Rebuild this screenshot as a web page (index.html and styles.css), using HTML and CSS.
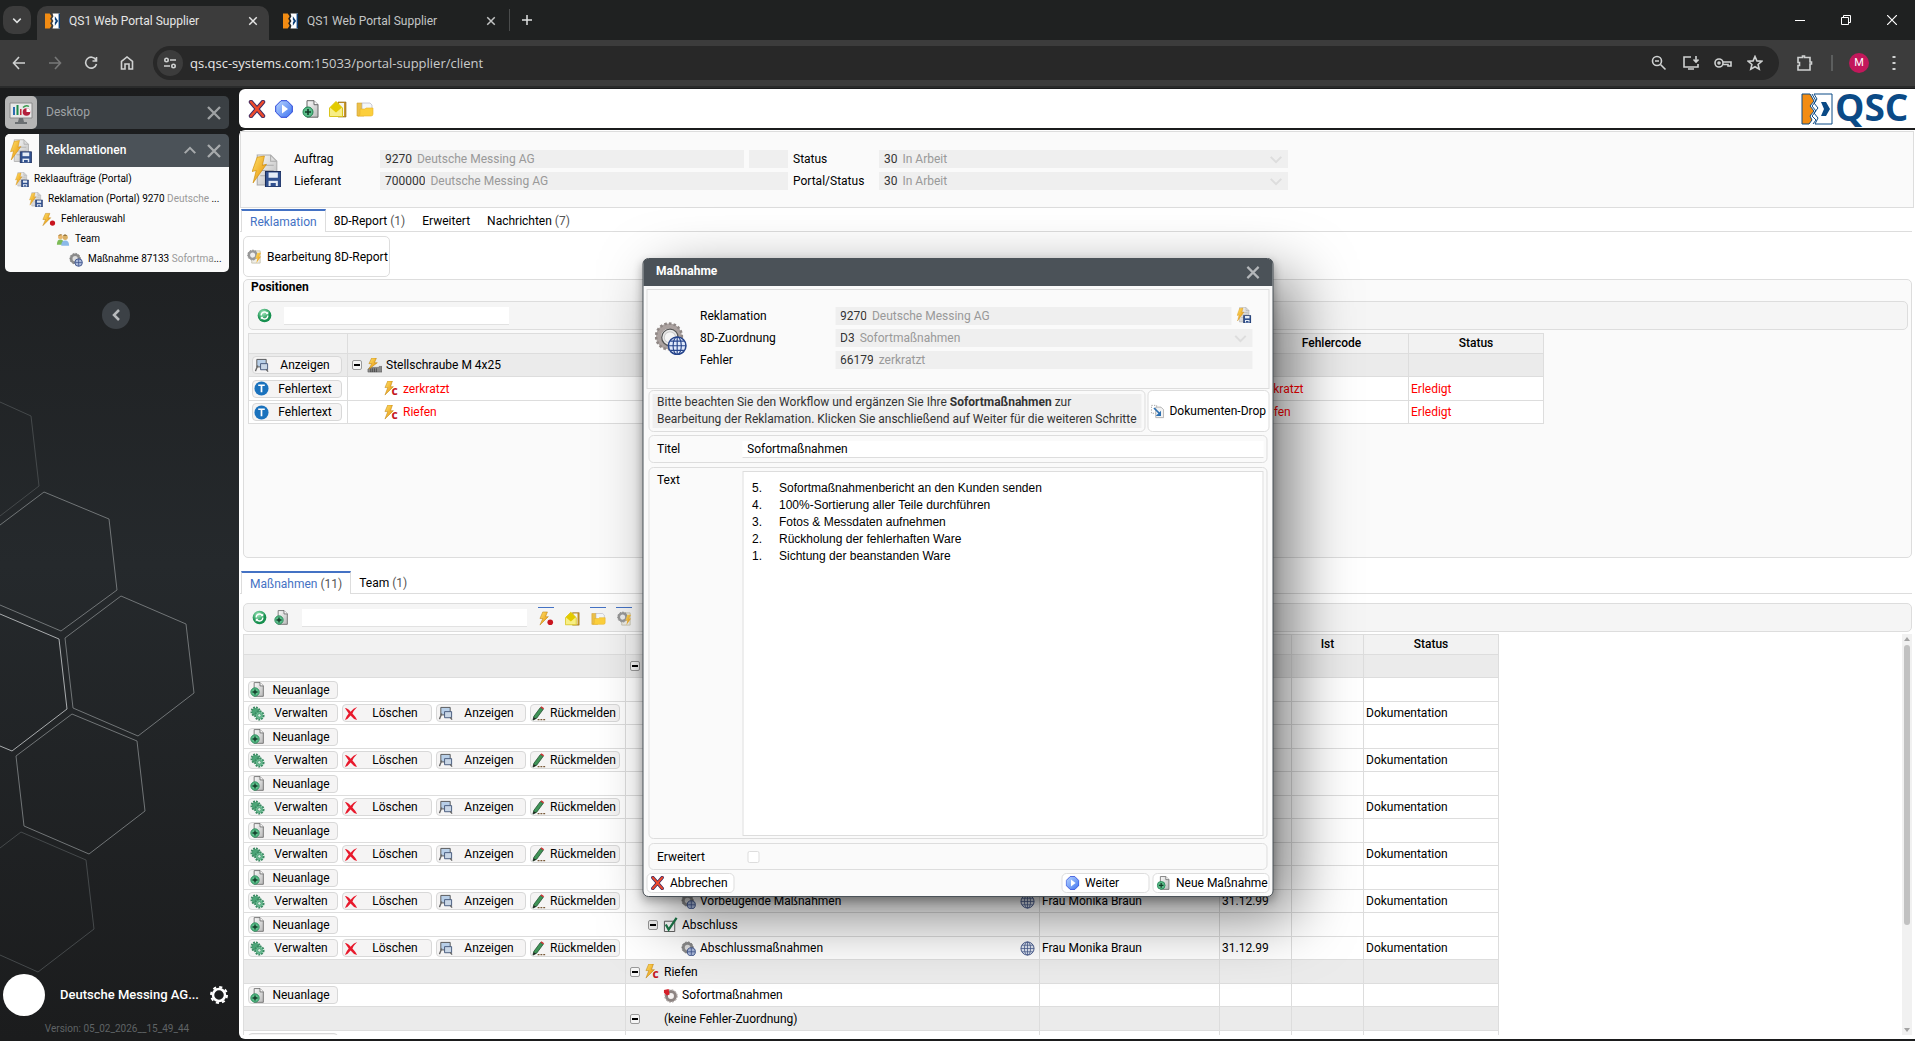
FILE: index.html
```html
<!DOCTYPE html>
<html lang="de">
<head>
    <meta charset="UTF-8">
    <meta name="viewport" content="width=device-width, initial-scale=1.0">
    <title>QS1 Web Portal Supplier</title>
    <link rel="stylesheet" href="styles.css">
</head>
<body>
    <!-- icon set -->
    <svg class="sprite" aria-hidden="true">
        <defs>
            <linearGradient id="gold" x1="0" y1="0" x2="1" y2="1"><stop offset="0" stop-color="#ffe36b"/><stop offset="1" stop-color="#e58a00"/></linearGradient>
            <linearGradient id="blue" x1="0" y1="0" x2="1" y2="1"><stop offset="0" stop-color="#b9d6ff"/><stop offset="1" stop-color="#3f74f0"/></linearGradient>
            <radialGradient id="green" cx=".4" cy=".3"><stop offset="0" stop-color="#a5ecc0"/><stop offset="1" stop-color="#17904f"/></radialGradient>
            <linearGradient id="paper" x1="0" y1="0" x2="1" y2="1"><stop offset="0" stop-color="#fbfbfb"/><stop offset="1" stop-color="#b9b9b9"/></linearGradient>
        </defs>
        <symbol id="i-cancel" viewBox="0 0 18 18"><path d="M3 2l12 14M15 2L3 16" stroke="#3b2a63" stroke-width="4.4" stroke-linecap="round"/><path d="M3 2l12 14M15 2L3 16" stroke="#ee4a2c" stroke-width="2.6" stroke-linecap="round"/></symbol>
        <symbol id="i-play" viewBox="0 0 18 18"><path d="M6 .7h6l5.3 5.3v6L12 17.300H6L.7 12V6z" fill="url(#blue)" stroke="#2743d8"/><path d="M7 4.500l6 4.500-6 4.500z" fill="#fff"/></symbol>
        <symbol id="i-newdoc" viewBox="0 0 18 18"><path d="M5 .7h7l4 4v12.500H5z" fill="url(#paper)" stroke="#666"/><path d="M12 .7v4h4" fill="#fff" stroke="#666"/><circle cx="6" cy="12" r="5" fill="#5cbd8a" stroke="#1f8452"/><path d="M6 9v6M3 12h6" stroke="#123b28" stroke-width="1.600"/></symbol>
        <symbol id="i-mail" viewBox="0 0 18 18"><path d="M9 2h8v15H9z" fill="#c9962b" stroke="#8a6415" stroke-width=".6"/><path d="M10 3h5v13h-5z" fill="#f4f4ee"/><path d="M.5 8L7 1.500 13.500 8v8.500H.5z" fill="#f7ee86" stroke="#d9c41c"/><path d="M1 7.500l6-6 6 6-6 5z" fill="#e3cb00"/></symbol>
        <symbol id="i-folder" viewBox="0 0 18 18"><path d="M1 3h5l1 2h1v11H1z" fill="#ecc04a" stroke="#d2a133" stroke-width=".6"/><path d="M6 3h8l2 2v6H6z" fill="#f4f7f9" stroke="#aab" stroke-width=".6"/><path d="M4 9h5l1-1h7v6q0 2-2 2H2q2 0 2-2z" fill="#fccf3c" stroke="#e9b225" stroke-width=".6"/></symbol>
        <symbol id="i-rekla" viewBox="0 0 28 32"><path d="M5 1h13l6 6v23H5z" fill="url(#paper)" stroke="#aaa"/><path d="M18 1v6h6M8 11h13M8 16h13M8 21h8" fill="none" stroke="#aaa"/><path d="M5 3l7-1-2 9 4-1L1 28l3-12-4 1z" fill="url(#gold)" stroke="#c98500" stroke-width=".6"/><path d="M13 17h15v15H13z" fill="#31518f" stroke="#1b2c59"/><path d="M16 18h9v5h-9zM16 26h9v5h-9z" fill="#e6edf6"/><path d="M15 23.500h11v2H15zM18 28h5v3h-5z" fill="#31518f"/></symbol>
        <symbol id="i-boltdot" viewBox="0 0 16 16"><path d="M4 1h5L7 6h3L1 15l3-7H1z" fill="url(#gold)" stroke="#b97a00" stroke-width=".5"/><circle cx="12" cy="12" r="3" fill="#c9151f"/></symbol>
        <symbol id="i-boltc" viewBox="0 0 16 16"><path d="M4 0h5L7 6h3L1 15l3-8H1z" fill="url(#gold)" stroke="#b97a00" stroke-width=".5"/><text x="8" y="15" class="c-mark">c</text></symbol>
        <symbol id="i-screw" viewBox="0 0 16 16"><path d="M3 10h10v-1h3v6H1v-3z" fill="#8a8a8a" stroke="#555" stroke-width=".6"/><path d="M4 15V11m2 4v-4m2 4v-4m2 4v-4" stroke="#333" stroke-width=".7"/><path d="M5 0h5L8 5h3L2 12l3-6H2z" fill="url(#gold)" stroke="#b97a00" stroke-width=".5"/></symbol>
        <symbol id="i-team" viewBox="0 0 16 16"><path d="M1 14q0-6 4-6t4 6z" fill="#7dbb57"/><path d="M6 15q0-6 4.500-6T15 15z" fill="#8bb9e8"/><circle cx="5" cy="5" r="2.800" fill="#e9b86f"/><circle cx="10.500" cy="5.500" r="3" fill="#d9b066"/><path d="M2.500 4q1-3 5-1.500zM8 4q2-4 5 0z" fill="#9c7a3f"/></symbol>
        <symbol id="i-gearglobe" viewBox="0 0 32 32"><circle cx="14" cy="14" r="10" fill="none" stroke="#aaa19f" stroke-width="5"/><circle cx="14" cy="14" r="12.500" fill="none" stroke="#8f8785" stroke-width="2.500" stroke-dasharray="2.500 2"/><circle cx="15" cy="15" r="8" fill="#e9e9e9" stroke="#555" stroke-width="1.200"/><circle cx="15" cy="15" r="5.500" fill="#f4f4f4" stroke="#ccc"/><circle cx="22" cy="23" r="8.500" fill="#dfe9fb" stroke="#27458c" stroke-width="1.500"/><path d="M22 14.500v17M13.500 23h17M15.500 18.500h13M15.500 27.500h13" stroke="#27458c" stroke-width="1.100"/><ellipse cx="22" cy="23" rx="4" ry="8.500" fill="none" stroke="#27458c" stroke-width="1.100"/></symbol>
        <symbol id="i-gearsm" viewBox="0 0 16 16"><circle cx="7" cy="7" r="4.500" fill="#ddd" stroke="#8b8b8b" stroke-width="3"/><circle cx="7" cy="7" r="6" fill="none" stroke="#777" stroke-width="1" stroke-dasharray="2 1.500"/><circle cx="11" cy="11.500" r="4.300" fill="#a9b9da" stroke="#3a4f88"/><path d="M11 7.500v8M7 11.500h8" stroke="#3a4f88" stroke-width=".8"/></symbol>
        <symbol id="i-gearbolt" viewBox="0 0 16 16"><path d="M6 2h8v13H5z" fill="#f0efe9" stroke="#c7c3b0"/><circle cx="6" cy="6.500" r="4" fill="#eee" stroke="#999" stroke-width="2.600"/><circle cx="6" cy="6.500" r="5.300" fill="none" stroke="#888" stroke-dasharray="1.500 1.500"/><path d="M11 4h4l-2 4h2l-5 7 1-5H9z" fill="url(#gold)"/></symbol>
        <symbol id="i-gearred" viewBox="0 0 16 16"><circle cx="8.500" cy="8.500" r="4.800" fill="#f5f2f1" stroke="#8d8482" stroke-width="3.200"/><circle cx="8.500" cy="8.500" r="6.700" fill="none" stroke="#a9a09e" stroke-width="1" stroke-dasharray="2 1.500"/><path d="M1 2l5-1 1 6-3 1-3-3z" fill="#d5202a"/></symbol>
        <symbol id="i-refresh" viewBox="0 0 16 16"><circle cx="8" cy="8" r="7.300" fill="url(#green)"/><path d="M4.500 8a3.500 3.500 0 0 1 6.500-2M11.500 8a3.500 3.500 0 0 1-6.500 2" stroke="#fff" stroke-width="1.400" fill="none"/><path d="M12 3.500v3.200H9zM4 12.500V9.300h3z" fill="#fff"/></symbol>
        <symbol id="i-view" viewBox="0 0 16 16"><path d="M3 1.500h10v8H3z" fill="#b8cfe8" stroke="#555"/><path d="M7 6h7.500v6.500H7z" fill="#c8d6e6" stroke="#44597c"/><path d="M4 8l-2.500 6M13 12l2 2.500" stroke="#666" stroke-width="1.400"/></symbol>
        <symbol id="i-text" viewBox="0 0 16 16"><circle cx="8" cy="8" r="7.500" fill="#1a72bd"/><path d="M4.500 4.500h7M8 4.500v7.500" stroke="#fff" stroke-width="1.800"/></symbol>
        <symbol id="i-gears" viewBox="0 0 16 16"><circle cx="6" cy="6" r="4" fill="#4ca577"/><circle cx="6" cy="6" r="4.500" fill="none" stroke="#3b8a62" stroke-width="2" stroke-dasharray="2 1"/><circle cx="10" cy="10" r="4" fill="#6dc096"/><circle cx="10" cy="10" r="4.500" fill="none" stroke="#3b8a62" stroke-width="2" stroke-dasharray="2 1"/><circle cx="10" cy="10" r="1.800" fill="#d7f0e2" stroke="#2c7a53" stroke-width=".6"/></symbol>
        <symbol id="i-delete" viewBox="0 0 16 16"><path d="M1 2q3 0 6 4 3-4 7-5-4 4-5 7 3 3 5 7-4-1-7-5-3 4-6 5 2-5 4-7-2-3-4-6z" fill="#e8192c"/></symbol>
        <symbol id="i-pencil" viewBox="0 0 16 16"><path d="M2 11L9 1.500l3 2L5 13l-4 2z" fill="#3f9457" stroke="#1e4b2b" stroke-width=".8"/><path d="M9 1.500l1-1.200 3 2-1 1.200z" fill="#c33"/><path d="M1 15l.8-3L4.500 13.500z" fill="#222"/><path d="M6 14.500h9" stroke="#7a5b3a" stroke-width="1.300" stroke-dasharray="2 1"/></symbol>
        <symbol id="i-globe" viewBox="0 0 16 16"><circle cx="8" cy="8" r="7" fill="#dfe6f3" stroke="#46598c"/><ellipse cx="8" cy="8" rx="3.300" ry="7" fill="none" stroke="#46598c" stroke-width=".8"/><path d="M8 1v14M1 8h14M2.200 4.500h11.600M2.200 11.500h11.600" stroke="#46598c" stroke-width=".8"/></symbol>
        <symbol id="i-check" viewBox="0 0 16 16"><path d="M1.500 4.500h11v11h-11z" fill="#fff" stroke="#555"/><path d="M3 8l3 5.500L14.500 1" fill="none" stroke="#1c7a4a" stroke-width="2.400"/></symbol>
        <symbol id="i-drop" viewBox="0 0 16 16"><path d="M1 1h6v9H1z" fill="none" stroke="#999" stroke-dasharray="1.500 1.500"/><path d="M6 3h6l3 3v9H6z" fill="#f2f2f2" stroke="#aaa"/><path d="M4 4l6 6" stroke="#2c6fb0" stroke-width="2"/><path d="M12 7v6H6z" fill="#2c6fb0"/></symbol>
        <symbol id="i-desktop" viewBox="0 0 24 24"><path d="M1 2h22v15H1z" fill="#e9e9e9" stroke="#8a8a8a"/><path d="M10 17h4l1 4h3v2H6v-2h3z" fill="#6b6f72"/><path d="M4 14V6h2v8z" fill="#2b6cb0"/><path d="M7.500 14V4h2v10z" fill="#1c8a4a"/><path d="M11 14V8h1.500v6z" fill="#c22b3a"/><circle cx="17.500" cy="11" r="3.800" fill="#b3203c"/><path d="M17.500 11V7.200a3.800 3.800 0 0 1 3.800 3.800z" fill="#fff"/><path d="M14 6.500q3-3 6-1" fill="none" stroke="#3a9b4f" stroke-width="1.500"/></symbol>
        <symbol id="i-x" viewBox="0 0 16 16"><path d="M2 2l12 12M14 2L2 14" fill="none" stroke="currentColor" stroke-width="2.300"/></symbol>
        <symbol id="i-down" viewBox="0 0 16 10"><path d="M2 2l6 6 6-6" fill="none" stroke="currentColor" stroke-width="2.400"/></symbol>
        <symbol id="i-fav" viewBox="0 0 16 16"><path d="M0 0h5l2 3-1.500 2.500L7 8l-1.500 2.500L7 13l-2 3H0z" fill="#f28c13"/><path d="M8 0h8v16H8l1-3-1.500-2.500L9 8 7.500 5.500 9 3z" fill="#fff"/><path d="M10.500 3l3.500 5-3.500 5V9.500L11.500 8l-1-1.500z" fill="#0b3f78"/><path d="M14.500 0H16v16h-1.500z" fill="#0b3f78"/></symbol>
    </svg>

    <header class="browser">
        <div class="tabstrip">
            <button class="tab-search" aria-label="Tabs durchsuchen"><svg width="10" height="7"><use href="#i-down"/></svg></button>
            <div class="btab active">
                <svg width="15" height="16"><use href="#i-fav"/></svg><span>QS1 Web Portal Supplier</span>
                <button aria-label="Tab schließen"><svg width="10" height="10"><use href="#i-x"/></svg></button>
            </div>
            <div class="btab">
                <svg width="15" height="16"><use href="#i-fav"/></svg><span>QS1 Web Portal Supplier</span>
                <button aria-label="Tab schließen"><svg width="10" height="10"><use href="#i-x"/></svg></button>
            </div>
            <button class="new-tab" aria-label="Neuer Tab"><svg width="12" height="12" viewBox="0 0 12 12"><path d="M6 1v10M1 6h10" stroke="currentColor" stroke-width="1.500"/></svg></button>
            <div class="win-buttons">
                <button aria-label="Minimieren"><svg width="10" height="10"><path d="M0 5.500h10" stroke="#fff"/></svg></button>
                <button aria-label="Verkleinern"><svg width="10" height="10" fill="none" stroke="#fff"><path d="M.5 2.500h7v7h-7zM2.500 2.500v-2h7v7h-2"/></svg></button>
                <button aria-label="Schließen"><svg width="10" height="10"><path d="M0 0l10 10M10 0L0 10" stroke="#fff" stroke-width="1.200"/></svg></button>
            </div>
        </div>
        <div class="navbar">
            <button aria-label="Zurück"><svg width="14" height="14" viewBox="0 0 14 14"><path d="M7 1L1.500 7 7 13M1.500 7H13"/></svg></button>
            <button aria-label="Vorwärts" class="dim"><svg width="14" height="14" viewBox="0 0 14 14"><path d="M7 1l5.500 6L7 13M12.500 7H1"/></svg></button>
            <button aria-label="Neu laden"><svg width="14" height="14" viewBox="0 0 14 14"><path d="M12 4A5.500 5.500 0 1 0 12.500 8M12.500 1v4h-4"/></svg></button>
            <button aria-label="Startseite"><svg width="14" height="14" viewBox="0 0 14 14"><path d="M1.500 13V5.500L7 1l5.500 4.500V13H9V8H5v5z"/></svg></button>
            <div class="omnibox">
                <button class="site-info" aria-label="Websiteinformationen"><svg width="14" height="14" viewBox="0 0 14 14"><circle cx="3.500" cy="4" r="1.700"/><path d="M7 4h6M1 10h6"/><circle cx="10.500" cy="10" r="1.700"/></svg></button>
                <p class="url"><b>qs.qsc-systems.com</b>:15033/portal-supplier/client</p>
                <button aria-label="Zoom"><svg width="16" height="16" viewBox="0 0 16 16"><circle cx="6" cy="6" r="4.500"/><path d="M4 6h4M9.500 9.500l5 5"/></svg></button>
                <button aria-label="Installieren"><svg width="16" height="16" viewBox="0 0 16 16"><path d="M8 2H1v10h14V9M5 14h6M13 1v5M10.500 4.500L13 7l2.500-2.500"/></svg></button>
                <button aria-label="Passwörter"><svg width="18" height="14" viewBox="0 0 18 14"><circle cx="5" cy="7" r="4"/><circle cx="5" cy="7" r="1"/><path d="M9 6h8v4h-3V8.500H9"/></svg></button>
                <button aria-label="Lesezeichen"><svg width="16" height="16" viewBox="0 0 16 16"><path d="M8 1.500l1.900 4.400 4.800.4-3.600 3.200 1.100 4.700L8 11.700l-4.200 2.500 1.100-4.700L1.300 6.300l4.800-.4z"/></svg></button>
            </div>
            <button class="ext" aria-label="Erweiterungen"><svg width="18" height="18" viewBox="0 0 18 18"><path d="M2 3.500h4.500V2h2v1.500H14V8h1.500v2H14v6H2v-4.500h1.500v-3H2z"/></svg></button>
            <span class="sep"></span>
            <button class="avatar" aria-label="Profil">M</button>
            <button class="menu" aria-label="Menü"><svg width="4" height="16" viewBox="0 0 4 16"><path d="M2 1v2M2 7v2M2 13v2" stroke-width="3"/></svg></button>
        </div>
    </header>

    <div class="app">
        <aside class="sidebar">
            <svg class="hexes" width="239" height="953" viewBox="0 88 239 953" aria-hidden="true">
                <g fill="none" stroke="#717577">
                    <path d="M0 402l31 14 8 70-39 30" stroke="#45494b"/>
                    <path d="M0 525l44-33 65 27 8 71-56 41-61-26"/>
                    <path d="M0 614l59 25 8 70-55 42-12-5" stroke="#a9acae"/>
                    <path d="M65 638l56-42 65 28 8 69-56 43-65-28z"/>
                    <path d="M16 756l56-42 65 27 8 70-56 43-65-28z"/>
                    <path d="M0 848l21-16 65 28 8 69-56 43-38-17" stroke="#45494b"/>
                </g>
            </svg>
            <nav>
                <div class="app-item">
                    <span class="app-icon"><svg width="24" height="24"><use href="#i-desktop"/></svg></span>
                    <a href="#">Desktop</a>
                    <button aria-label="Desktop schließen"><svg width="16" height="16"><use href="#i-x"/></svg></button>
                </div>
                <div class="app-item open">
                    <span class="app-icon"><svg width="22" height="24"><use href="#i-rekla"/></svg></span>
                    <a href="#">Reklamationen</a>
                    <button aria-label="Zuklappen"><svg class="up" width="14" height="9"><use href="#i-down"/></svg></button>
                    <button aria-label="Reklamationen schließen"><svg width="16" height="16"><use href="#i-x"/></svg></button>
                </div>
                <ul class="tree">
                    <li><a href="#"><svg><use href="#i-rekla"/></svg>Reklaaufträge (Portal)</a></li>
                    <li class="l1"><a href="#"><svg><use href="#i-rekla"/></svg>Reklamation (Portal) 9270 <span>Deutsche</span> ...</a></li>
                    <li class="l2"><a href="#"><svg><use href="#i-boltdot"/></svg>Fehlerauswahl</a></li>
                    <li class="l3"><a href="#"><svg><use href="#i-team"/></svg>Team</a></li>
                    <li class="l4"><a href="#"><svg><use href="#i-gearsm"/></svg>Maßnahme 87133 <span>Sofortma</span>...</a></li>
                </ul>
            </nav>
            <button class="collapse" aria-label="Seitenleiste einklappen"><svg width="9" height="14" viewBox="0 0 9 14"><path d="M7 2L2 7l5 5" fill="none" stroke="currentColor" stroke-width="2.500"/></svg></button>
            <div class="user">
                <span class="user-pic"></span>
                <strong>Deutsche Messing AG...</strong>
                <button aria-label="Einstellungen"><svg width="20" height="20" viewBox="0 0 20 20"><circle cx="10" cy="10" r="6" fill="none" stroke="#fff" stroke-width="2.500"/><circle cx="10" cy="10" r="8" fill="none" stroke="#fff" stroke-width="2" stroke-dasharray="3.140 3.140"/></svg></button>
            </div>
            <p class="version">Version: 05_02_2026__15_49_44</p>
        </aside>

        <main>
            <div class="topbar">
                <button aria-label="Abbrechen"><svg><use href="#i-cancel"/></svg></button>
                <button aria-label="Weiter"><svg><use href="#i-play"/></svg></button>
                <button aria-label="Neu"><svg><use href="#i-newdoc"/></svg></button>
                <button aria-label="Nachricht"><svg><use href="#i-mail"/></svg></button>
                <button aria-label="Ordner"><svg><use href="#i-folder"/></svg></button>
                <svg class="logo" width="108" height="38" viewBox="0 0 108 38" role="img" aria-label="QSC">
                    <path d="M1 4h8l4 7-4 5 4 5-4 5 2 4-3 4H1z" fill="#f28c13" stroke="#0b4a86"/>
                    <path d="M13 4h18v30H14l3-6-4-5 4-5-4-5 3-4z" fill="#fff" stroke="#0b4a86"/>
                    <path d="M11 4l4 7-4 5 4 5-4 5 4 4-3 4" fill="none" stroke="#0b4a86"/>
                    <path d="M20 12h5l4 7-4 7h-5l3-7z" fill="#0b4a86"/>
                    <text x="34" y="31">QSC</text>
                </svg>
            </div>

            <div class="content">
                <section class="record">
                    <svg class="record-icon"><use href="#i-rekla"/></svg>
                    <div class="record-form">
                        <label for="auftrag">Auftrag</label>
                        <div class="pair"><div class="field"><input id="auftrag" value="9270" size="4" readonly><span>Deutsche Messing AG</span></div><div class="field extra"></div></div>
                        <label for="status">Status</label>
                        <div class="field"><select id="status"><option>30</option></select><span>In Arbeit</span><svg><use href="#i-down"/></svg></div>
                        <label for="lieferant">Lieferant</label>
                        <div class="field"><input id="lieferant" value="700000" size="6" readonly><span>Deutsche Messing AG</span></div>
                        <label for="pstatus">Portal/Status</label>
                        <div class="field"><select id="pstatus"><option>30</option></select><span>In Arbeit</span><svg><use href="#i-down"/></svg></div>
                    </div>
                </section>

                <div class="tabs" role="tablist">
                    <button role="tab" class="active">Reklamation</button>
                    <button role="tab">8D-Report <i>(1)</i></button>
                    <button role="tab">Erweitert</button>
                    <button role="tab">Nachrichten <i>(7)</i></button>
                </div>
                <button class="big-btn"><svg><use href="#i-gearbolt"/></svg>Bearbeitung 8D-Report</button>

                <section class="group">
                    <h2>Positionen</h2>
                    <div class="toolbar">
                        <button aria-label="Aktualisieren"><svg><use href="#i-refresh"/></svg></button>
                        <input type="text" aria-label="Suche Positionen">
                    </div>
                    <table class="positions">
                        <colgroup><col class="c-act"><col><col class="c-code"><col class="c-status"></colgroup>
                        <thead><tr><th></th><th></th><th>Fehlercode</th><th>Status</th></tr></thead>
                        <tbody>
                            <tr class="grp"><td><button class="row-btn"><svg><use href="#i-view"/></svg><span>Anzeigen</span></button></td><td><div class="node"><button class="fold" aria-label="Zuklappen"></button><svg><use href="#i-screw"/></svg>Stellschraube M 4x25</div></td><td></td><td></td></tr>
                            <tr class="red"><td><button class="row-btn"><svg><use href="#i-text"/></svg><span>Fehlertext</span></button></td><td><div class="node n2"><svg><use href="#i-boltc"/></svg>zerkratzt</div></td><td>zerkratzt</td><td>Erledigt</td></tr>
                            <tr class="red"><td><button class="row-btn"><svg><use href="#i-text"/></svg><span>Fehlertext</span></button></td><td><div class="node n2"><svg><use href="#i-boltc"/></svg>Riefen</div></td><td>Riefen</td><td>Erledigt</td></tr>
                        </tbody>
                    </table>
                </section>

                <div class="tabs lower" role="tablist">
                    <button role="tab" class="active">Maßnahmen <i>(11)</i></button>
                    <button role="tab">Team <i>(1)</i></button>
                </div>
                <div class="toolbar actions">
                    <button aria-label="Aktualisieren"><svg><use href="#i-refresh"/></svg></button>
                    <button aria-label="Neuanlage"><svg><use href="#i-newdoc"/></svg></button>
                    <input type="text" aria-label="Suche Maßnahmen">
                    <button class="toggle on" aria-label="Fehler"><svg><use href="#i-boltdot"/></svg></button>
                    <button class="toggle" aria-label="Nachricht"><svg><use href="#i-mail"/></svg></button>
                    <button class="toggle on" aria-label="Ordner"><svg><use href="#i-folder"/></svg></button>
                    <button class="toggle on" aria-label="Bearbeitung"><svg><use href="#i-gearbolt"/></svg></button>
                </div>
                <div class="scroll">
                    <table class="measures">
                        <colgroup><col class="m-act"><col><col class="m-who"><col class="m-date"><col class="m-date"><col class="m-status"></colgroup>
                        <thead><tr><th></th><th></th><th></th><th></th><th>Ist</th><th>Status</th></tr></thead>
                        <tbody id="measures"></tbody>
                    </table>
                    <div class="scrollbar"><span class="arrow up"></span><span class="thumb"></span><span class="arrow"></span></div>
                </div>
            </div>
        </main>
    </div>

    <div class="dialog" role="dialog" aria-labelledby="dlg-title">
        <div class="dialog-head">
            <h2 id="dlg-title">Maßnahme</h2>
            <button aria-label="Schließen"><svg width="15" height="15"><use href="#i-x"/></svg></button>
        </div>
        <div class="dialog-record">
            <svg class="gear"><use href="#i-gearglobe"/></svg>
            <div class="dialog-form">
                <label for="d-rekla">Reklamation</label>
                <div class="pair"><div class="field"><input id="d-rekla" value="9270" size="4" readonly><span>Deutsche Messing AG</span></div><svg class="link"><use href="#i-rekla"/></svg></div>
                <label for="d-8d">8D-Zuordnung</label>
                <div class="field"><select id="d-8d"><option>D3</option></select><span>Sofortmaßnahmen</span><svg><use href="#i-down"/></svg></div>
                <label for="d-fehler">Fehler</label>
                <div class="field"><input id="d-fehler" value="66179" size="5" readonly><span>zerkratzt</span></div>
            </div>
        </div>
        <div class="hint-row">
            <div class="box hint"><p>Bitte beachten Sie den Workflow und ergänzen Sie Ihre <b>Sofortmaßnahmen</b> zur<br>Bearbeitung der Reklamation. Klicken Sie anschließend auf Weiter für die weiteren Schritte</p></div>
            <button class="drop"><svg><use href="#i-drop"/></svg>Dokumenten-Drop</button>
        </div>
        <div class="box row">
            <label for="d-titel">Titel</label>
            <input id="d-titel" type="text" value="Sofortmaßnahmen">
        </div>
        <div class="box row grow">
            <span>Text</span>
            <div class="editor" contenteditable="true" aria-label="Text">
                <ol reversed>
                    <li>Sofortmaßnahmenbericht an den Kunden senden</li>
                    <li>100%-Sortierung aller Teile durchführen</li>
                    <li>Fotos &amp; Messdaten aufnehmen</li>
                    <li>Rückholung der fehlerhaften Ware</li>
                    <li>Sichtung der beanstanden Ware</li>
                </ol>
            </div>
        </div>
        <div class="box row">
            <label for="d-erw">Erweitert</label>
            <input id="d-erw" type="checkbox">
        </div>
        <div class="dialog-foot">
            <button><svg><use href="#i-cancel"/></svg>Abbrechen</button>
            <button class="next"><svg><use href="#i-play"/></svg>Weiter</button>
            <button class="new"><svg><use href="#i-newdoc"/></svg>Neue Maßnahme</button>
        </div>
    </div>

    <script>
        const NEW = [['newdoc', 'Neuanlage']];
        const EDIT = [['gears', 'Verwalten'], ['delete', 'Löschen'], ['view', 'Anzeigen'], ['pencil', 'Rückmelden']];

        // level, icon, text, foldable, person, date
        const rows = [
            { grp: true, fold: true },
            { act: NEW }, { act: EDIT, status: 'Dokumentation' },
            { act: NEW }, { act: EDIT, status: 'Dokumentation' },
            { act: NEW }, { act: EDIT, status: 'Dokumentation' },
            { act: NEW }, { act: EDIT, status: 'Dokumentation' },
            { act: NEW }, { act: EDIT, level: 2, icon: 'gearsm', text: 'Vorbeugende Maßnahmen', who: 'Frau Monika Braun', date: '31.12.99', status: 'Dokumentation' },
            { act: NEW, level: 1, fold: true, icon: 'check', text: 'Abschluss' },
            { act: EDIT, level: 2, icon: 'gearsm', text: 'Abschlussmaßnahmen', who: 'Frau Monika Braun', date: '31.12.99', status: 'Dokumentation' },
            { grp: true, fold: true, icon: 'boltc', text: 'Riefen' },
            { act: NEW, level: 1, icon: 'gearred', text: 'Sofortmaßnahmen', leaf: true },
            { grp: true, fold: true, text: '(keine Fehler-Zuordnung)' },
            { act: NEW }
        ];

        const icon = name => name ? `<svg><use href="#i-${name}"/></svg>` : '<svg></svg>';
        const button = ([name, text]) => `<button class="row-btn">${icon(name)}<span>${text}</span></button>`;

        document.getElementById('measures').innerHTML = rows.map(r => {
            const fold = r.fold ? '<button class="fold" aria-label="Zuklappen"></button>' : '<span class="nofold"></span>';
            const node = r.text || r.fold
                ? `<div class="node m${r.level || 0}">${fold}${icon(r.icon)}${r.text || ''}${r.who ? '<svg class="web"><use href="#i-globe"/></svg>' : ''}</div>`
                : '';
            return `<tr class="${r.grp ? 'grp' : ''}">
                <td><div class="btns">${(r.act || []).map(button).join('')}</div></td>
                <td>${node}</td><td>${r.who || ''}</td><td>${r.date || ''}</td><td></td><td>${r.status || ''}</td></tr>`;
        }).join('');
    </script>
</body>
</html>
```

FILE: styles.css
```css
* {
    box-sizing: border-box;
}
body {
    margin: 0;
    height: 100vh;
    display: flex;
    flex-direction: column;
    overflow: hidden;
    background: #1b1c1d;
    font-family: Roboto, Arial, sans-serif;
    font-size: 12px;
    line-height: 16px;
    color: #000;
}
button, input, select {
    font: inherit;
    color: inherit;
}
button {
    padding: 0;
    border: none;
    background: none;
    display: inline-flex;
    align-items: center;
    justify-content: center;
    white-space: nowrap;
}
h2, p, ul, ol {
    margin: 0;
    padding: 0;
}
svg {
    flex: none;
}
a {
    color: inherit;
    text-decoration: none;
}
.sprite {
    position: absolute;
    width: 0;
    height: 0;
}
.c-mark {
    font: bold 13px "Open Sans", sans-serif;
    fill: #c4161c;
}

/* browser frame */
.browser {
    flex: none;
    color: #dfe1e1;
}
.tabstrip {
    display: flex;
    align-items: flex-end;
    height: 40px;
    padding-left: 3px;
    background: #1f2121;
}
.tab-search {
    width: 28px;
    height: 28px;
    margin: 0 6px 6px 0;
    border-radius: 10px;
    background: #3c3c3c;
}
.btab {
    display: flex;
    align-items: center;
    width: 232px;
    height: 34px;
    padding: 0 11px 4px 8px;
    color: #c3c5c5;
}
.btab.active {
    background: #3c3c3c;
    border-radius: 10px 10px 0 0;
    color: #e6e6e6;
}
.btab + .btab {
    margin-left: 6px;
}
.btab span {
    flex: 1;
    margin-left: 9px;
    white-space: nowrap;
}
.new-tab {
    width: 28px;
    height: 22px;
    margin: 0 0 9px 2px;
    padding-left: 6px;
    border-left: 1px solid #4a4c4c;
}
.win-buttons {
    display: flex;
    align-self: center;
    margin-left: auto;
}
.win-buttons button {
    width: 46px;
    height: 40px;
}
.navbar {
    display: flex;
    align-items: center;
    height: 48px;
    padding: 0 9px 0 1px;
    background: #3c3c3c;
    border-bottom: 2px solid #2a2b2b;
}
.navbar svg {
    fill: none;
    stroke: #cfd1d1;
    stroke-width: 1.6;
}
.navbar > button {
    width: 36px;
    height: 34px;
}
.navbar .dim {
    opacity: 0.4;
}
.omnibox {
    flex: 1;
    display: flex;
    align-items: center;
    height: 34px;
    margin-left: 8px;
    padding: 0 8px 0 4px;
    border-radius: 17px;
    background: #282828;
}
.omnibox button {
    width: 32px;
}
.omnibox .site-info {
    width: 26px;
    height: 26px;
    border-radius: 13px;
    background: #3c3c3c;
}
.url {
    flex: 1;
    margin-left: 7px;
    font-family: "Open Sans", sans-serif;
    font-size: 13px;
    color: #c9cbcb;
}
.url b {
    font-weight: normal;
    color: #e8e8e8;
}
.navbar .ext {
    width: 52px;
}
.sep {
    width: 2px;
    height: 16px;
    background: #5c5e5e;
}
.navbar .avatar {
    width: 20px;
    height: 20px;
    margin: 0 13px 0 16px;
    border-radius: 10px;
    background: #c2185b;
    color: #fff;
    font-size: 11px;
}
.navbar .menu {
    width: 24px;
}

/* sidebar */
.app {
    flex: 1;
    min-height: 0;
    display: flex;
}
.sidebar {
    position: relative;
    flex: none;
    display: flex;
    flex-direction: column;
    width: 239px;
    padding: 8px 10px 4px 5px;
    background: linear-gradient(#1b1c1d, #25292c 50%, #1b1c1d);
}
.hexes {
    position: absolute;
    left: 0;
    top: 0;
}
.sidebar nav {
    position: relative;
}
.app-item {
    display: flex;
    align-items: center;
    height: 33px;
    margin-bottom: 5px;
    padding-right: 7px;
    border-radius: 5px;
    background: #3b4044;
    color: #9fa2a4;
}
.app-item a {
    flex: 1;
    margin-left: 9px;
    padding-bottom: 1px;
}
.app-item button + button {
    margin-left: 9px;
}
.app-icon {
    display: flex;
    align-items: center;
    justify-content: center;
    width: 32px;
    height: 33px;
    border-radius: 5px;
    background: #b5b5b5;
}
.app-item.open {
    margin-bottom: 0;
    border-radius: 5px 5px 0 0;
    background: linear-gradient(90deg, #fafafa 34px, #4b5258 34px);
    color: #a7aaac;
}
.open .app-icon {
    background: #fafafa;
}
.open a {
    color: #fff;
    font-weight: 500;
}
.up {
    transform: rotate(180deg);
}
.tree {
    height: 105px;
    padding: 2px 4px 0 10px;
    border-radius: 0 0 5px 5px;
    background: #fafafa;
    list-style: none;
    font-size: 10px;
}
.tree li {
    height: 20px;
}
.tree a {
    display: flex;
    align-items: center;
    height: 20px;
    white-space: pre;
}
.tree svg {
    width: 14px;
    height: 15px;
    margin-right: 5px;
}
.tree span {
    color: #999;
}
.tree .l1 { padding-left: 14px; }
.tree .l2 { padding-left: 27px; }
.tree .l3 { padding-left: 41px; }
.tree .l4 { padding-left: 54px; }
.collapse {
    position: relative;
    width: 28px;
    height: 28px;
    margin: 29px 0 0 97px;
    border-radius: 14px;
    background: #3c4146;
    color: #b9bbbd;
}
.user {
    position: relative;
    display: flex;
    align-items: center;
    margin-top: auto;
}
.user-pic {
    width: 42px;
    height: 42px;
    margin-left: -2px;
    border-radius: 21px;
    background: #fff;
}
.user strong {
    flex: 1;
    margin-left: 15px;
    color: #fff;
    font-size: 13px;
    font-weight: 500;
    white-space: nowrap;
}
.version {
    position: relative;
    margin-top: 5px;
    color: #5f6365;
    font-size: 10px;
    text-align: center;
}

/* main area */
main {
    flex: 1;
    min-width: 0;
    display: flex;
    flex-direction: column;
    padding: 1px 0 2px;
}
.topbar {
    flex: none;
    display: flex;
    align-items: center;
    gap: 9px;
    height: 39px;
    padding: 0 6px 0 9px;
    border-radius: 6px 0 0 6px;
    background: #fff;
}
.topbar button svg {
    width: 18px;
    height: 18px;
}
.logo {
    margin-left: auto;
    overflow: visible;
}
.logo text {
    font: 700 37px "Open Sans", sans-serif;
    fill: #0b4a86;
}
.content {
    flex: 1;
    min-height: 0;
    display: flex;
    flex-direction: column;
    margin-top: 2px;
    padding: 1px 3px 4px 1px;
    border-radius: 6px 0 0 6px;
    background: #fff;
}
.record {
    flex: none;
    display: flex;
    margin-right: -2px;
    padding: 18px 11px 17px;
    border: 1px solid #ddd;
    background: #fafafa;
}
.record-icon {
    width: 29px;
    height: 33px;
    margin: 4px 13px 0 0;
}
.record-form {
    display: grid;
    grid-template-columns: 86px 408px 91px 409px;
    row-gap: 4px;
    align-items: center;
}
.record-form label:nth-of-type(even) {
    padding-left: 5px;
}
.field {
    flex: 1;
    display: flex;
    align-items: center;
    gap: 5px;
    height: 18px;
    padding: 0 5px;
    background: #efefef;
}
.field input, .field select {
    field-sizing: content;
    height: 18px;
    padding: 0;
    border: none;
    outline: none;
    background: none;
    appearance: none;
    color: #333;
}
.field span {
    flex: 1;
    color: #999;
}
.field svg {
    width: 14px;
    height: 9px;
    color: #ddd;
}
.pair {
    display: flex;
    gap: 5px;
}
.field.extra {
    flex: 0 0 39px;
}
.tabs {
    flex: none;
    display: flex;
    height: 23px;
    margin-top: 1px;
    border-bottom: 1px solid #ddd;
}
.tabs button {
    height: 23px;
    padding: 0 8px;
    white-space: pre;
}
.tabs i {
    color: #555;
    font-style: normal;
}
.tabs button + button {
    padding: 0 9px 0 8px;
}
.tabs .active {
    margin-left: 1px;
    padding: 0 8px;
    border: 1px solid #ddd;
    border-top: 2px solid #4472c4;
    border-bottom: none;
    background: #fff;
    color: #4472c4;
}
.big-btn {
    flex: none;
    align-self: flex-start;
    gap: 5px;
    height: 41px;
    margin: 4px 0 2px 3px;
    padding: 0 1px 0 3px;
    border: 1px solid #ddd;
    border-radius: 5px;
    background: #fff;
}
.big-btn svg {
    width: 15px;
    height: 15px;
}
.group {
    flex: none;
    min-height: 279px;
    margin-left: 3px;
    padding: 0 3px 0 4px;
    border: 1px solid #ddd;
    border-radius: 5px;
    background: #fafafa;
}
.group h2 {
    padding: 0 3px 7px;
    font-size: 12px;
    line-height: 14px;
}
.toolbar {
    flex: none;
    display: flex;
    align-items: center;
    height: 29px;
    padding-left: 8px;
    border: 1px solid #ddd;
    border-radius: 5px;
    background: #f5f5f5;
}
.toolbar svg {
    width: 15px;
    height: 15px;
}
.toolbar input {
    width: 225px;
    height: 18px;
    margin-left: 12px;
    padding: 0 4px;
    border: none;
    border-bottom: 1px solid #e2e2e2;
    background: #fff;
}
.lower {
    margin-top: 13px;
}
.actions {
    margin: 9px 0 2px 3px;
}
.actions button + button {
    margin-left: 7px;
}
.actions input {
    margin: 0 11px 0 13px;
}
.actions .toggle {
    width: 16px;
    height: 22px;
    border-top: 1px solid transparent;
}
.actions .toggle + .toggle {
    margin-left: 10px;
}
.actions .toggle.on {
    border-top-color: #4472c4;
}

/* tables */
table {
    table-layout: fixed;
    border-collapse: collapse;
    background: #fff;
}
th, td {
    height: 23px;
    padding: 0 2px;
    border: 1px solid #ddd;
    text-align: left;
}
tbody tr:nth-child(even) td {
    height: 24px;
}
th {
    height: 20px;
    padding-bottom: 2px;
    background: #f2f2f2;
    text-align: center;
    font-weight: 500;
}
.grp td {
    background: #ebebeb;
}
.red {
    color: #f00;
}
.positions {
    width: 1296px;
    margin-top: 3px;
}
.c-act { width: 99px; }
.c-code { width: 154px; }
.c-status { width: 135px; }
.measures {
    width: 1256px;
}
.m-act { width: 382px; }
.m-who { width: 180px; }
.m-date { width: 72px; }
.m-status { width: 135px; }
.btns {
    display: flex;
    gap: 4px;
    padding-left: 2px;
}
.row-btn {
    width: 90px;
    height: 18px;
    padding-left: 1px;
    border: 1px solid #d8d8d8;
    border-radius: 4px;
    background: #f5f4f4;
}
.row-btn svg {
    width: 15px;
    height: 15px;
}
.row-btn span {
    flex: 1;
}
.positions .row-btn {
    display: flex;
    margin-left: 1px;
    color: #000;
}
.node {
    display: flex;
    align-items: center;
    height: 18px;
}
.node svg {
    width: 15px;
    height: 15px;
    margin-right: 4px;
}
.node .web {
    margin: 0 2px 0 auto;
}
.n2 { padding-left: 34px; }
.m1 { padding-left: 18px; }
.m2 { padding-left: 36px; }
.fold, .nofold {
    flex: none;
    width: 10px;
    height: 10px;
    margin: 0 5px 0 2px;
}
.fold {
    border: 1px solid #999;
    border-radius: 2px;
    background: linear-gradient(#000, #000) center / 6px 2px no-repeat #f5f5f5;
}
.scroll {
    flex: 1;
    min-height: 0;
    display: flex;
    justify-content: space-between;
    align-items: flex-start;
    margin-left: 3px;
    overflow: hidden;
}
.scrollbar {
    display: flex;
    flex-direction: column;
    align-items: center;
    align-self: stretch;
    width: 10px;
    padding: 3px 0;
    background: #f1f1f1;
}
.thumb {
    flex: 0 0 71%;
    width: 6px;
    margin: 4px 0 auto;
    border-radius: 3px;
    background: #c1c1c1;
}
.arrow {
    border: 3px solid transparent;
    border-top: 4px solid #a3a3a3;
    border-bottom: none;
}

/* floating window */
.dialog {
    position: absolute;
    top: 258px;
    left: 50%;
    transform: translateX(-50%);
    display: flex;
    flex-direction: column;
    width: 631px;
    height: 639px;
    border: 1px solid #4b5258;
    border-radius: 6px;
    background: #fafafa;
    box-shadow: 20px 20px 60px rgba(0, 0, 0, 0.5), 0 4px 10px rgba(0, 0, 0, 0.3);
}
.dialog-head {
    flex: none;
    display: flex;
    align-items: center;
    justify-content: space-between;
    height: 27px;
    margin-bottom: 3px;
    padding: 0 12px 0 13px;
    border-radius: 4px 4px 0 0;
    background: #4b5258;
    color: #b4b7ba;
}
.dialog-head h2 {
    padding-bottom: 4px;
    color: #fff;
    font-size: 12px;
    font-weight: 700;
}
.dialog-record {
    flex: none;
    display: flex;
    align-items: center;
    margin: 0 3px 1px 3px;
    padding: 17px 16px 19px 7px;
    border: 1px solid #ddd;
}
.gear {
    width: 33px;
    height: 33px;
    margin-right: 13px;
}
.dialog-form {
    flex: 1;
    display: grid;
    grid-template-columns: 135px 1fr;
    row-gap: 4px;
    align-items: center;
}
.dialog-record .link {
    width: 15px;
    height: 16px;
    margin-right: 1px;
}
.hint-row {
    display: flex;
    justify-content: space-between;
    gap: 2px;
    margin: 0 3px 3px 5px;
}
.box {
    border: 1px solid #ddd;
    border-radius: 5px;
}
.hint {
    flex: 1;
    padding: 3px;
}
.hint p {
    padding: 0 5px;
    background: #efefef;
    color: #333;
    line-height: 17px;
    white-space: nowrap;
}
.drop, .dialog-foot button {
    border: 1px solid #ddd;
    border-radius: 5px;
    background: #fff;
}
.drop {
    gap: 5px;
    width: 123px;
}
.drop svg {
    width: 14px;
    height: 15px;
}
.row {
    display: flex;
    align-items: flex-start;
    margin: 0 5px 4px 5px;
    padding: 5px 3px 4px 8px;
}
.row > :first-child {
    width: 85px;
}
.row input[type="text"] {
    flex: 1;
    height: 17px;
    padding: 0 5px;
    border: none;
    border-bottom: 1px solid #ddd;
    background: #fff;
}
.row input[type="checkbox"] {
    appearance: none;
    width: 12px;
    height: 12px;
    margin: 2px 0 0 5px;
    border: 1px solid #ddd;
    border-radius: 2px;
    background: #fff;
}
.grow {
    flex: 1;
    padding: 3px 3px 2px 8px;
}
.grow > span {
    margin-top: 1px;
}
.editor {
    flex: 1;
    align-self: stretch;
    padding: 8px 9px;
    border: 1px solid #ddd;
    background: #fff;
    font-family: "Liberation Sans", Arial, sans-serif;
    line-height: 17px;
}
.editor ol {
    padding-left: 27px;
    list-style: none;
    counter-reset: step 6;
}
.editor li {
    counter-increment: step -1;
}
.editor li::before {
    content: counter(step) ".";
    display: inline-block;
    width: 27px;
    margin-left: -27px;
}
.dialog-foot {
    flex: none;
    display: flex;
    gap: 3px;
    margin: -1px 3px 3px 3px;
}
.dialog-foot button {
    justify-content: flex-start;
    gap: 6px;
    width: 88px;
    height: 20px;
    padding-left: 3px;
}
.dialog-foot svg {
    width: 14px;
    height: 14px;
}
.dialog-foot .next {
    margin-left: auto;
}
.dialog-foot .new {
    width: 117px;
}
```
